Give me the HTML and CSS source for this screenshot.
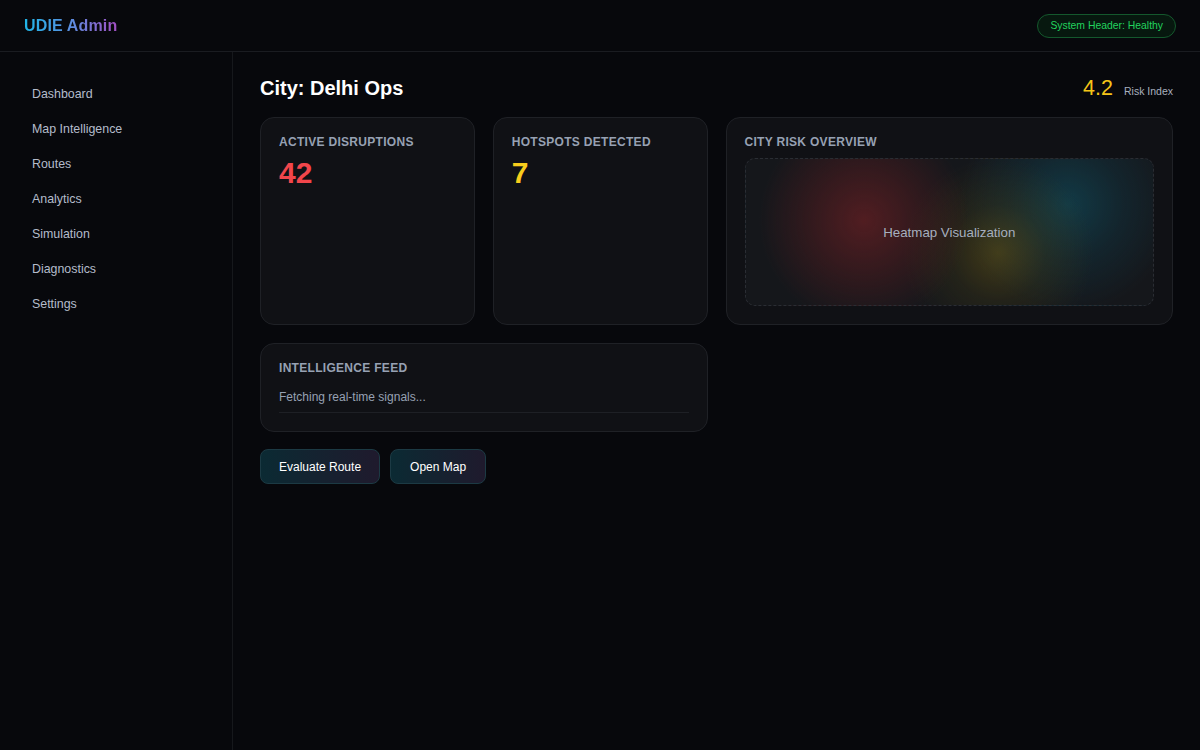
FILE: index.html
```html
<!DOCTYPE html>
<html lang="en">
<head>
  <meta charset="UTF-8" />
  <meta name="viewport" content="width=device-width, initial-scale=1" />
  <title>UDIE Admin</title>
  <link rel="stylesheet" href="styles.css">
</head>
<body>
  <header class="topbar">
    <div class="brand">UDIE Admin</div>
    <div class="status-pill">System Header: Healthy</div>
  </header>

  <div class="layout">
    <nav class="sidebar" aria-label="Main navigation">
      <a href="#">Dashboard</a>
      <a href="#">Map Intelligence</a>
      <a href="#">Routes</a>
      <a href="#">Analytics</a>
      <a href="#">Simulation</a>
      <a href="#">Diagnostics</a>
      <a href="#">Settings</a>
    </nav>

    <main class="content">
      <div class="page-head">
        <h1>City: Delhi Ops</h1>
        <div class="risk">
          <span class="risk-value">4.2</span>
          <span class="risk-label">Risk Index</span>
        </div>
      </div>

      <section class="grid">
        <div class="card">
          <div class="card-label">Active Disruptions</div>
          <div class="metric metric-red">42</div>
        </div>
        <div class="card">
          <div class="card-label">Hotspots Detected</div>
          <div class="metric metric-yellow">7</div>
        </div>
        <div class="card span-2">
          <div class="card-label">City Risk Overview</div>
          <div class="heatmap">Heatmap Visualization</div>
        </div>
        <div class="card span-2">
          <div class="card-label">Intelligence Feed</div>
          <div class="feed-item">Fetching real-time signals...</div>
        </div>
      </section>

      <div class="actions">
        <button type="button" class="btn">Evaluate Route</button>
        <button type="button" class="btn btn-map">Open Map</button>
      </div>
    </main>
  </div>
</body>
</html>
```

FILE: styles.css
```css
/* Reset and base */
* {
  box-sizing: border-box;
  margin: 0;
  padding: 0;
}
body {
  background: #07080c;
  color: #e5e7eb;
  font-family: "Liberation Sans", Arial, Helvetica, sans-serif;
  height: 100vh;
  display: flex;
  flex-direction: column;
  overflow: hidden;
}

/* Top bar */
.topbar {
  height: 52px;
  flex-shrink: 0;
  display: flex;
  align-items: center;
  justify-content: space-between;
  padding: 0 24px;
  border-bottom: 1px solid #1a1c21;
}
.brand {
  font-size: 16px;
  font-weight: 700;
  letter-spacing: 0.15px;
  background: linear-gradient(90deg, #1fb6e8 0%, #5b8ee0 50%, #a24fc4 100%);
  -webkit-background-clip: text;
  background-clip: text;
  color: transparent;
}
.status-pill {
  height: 24px;
  display: flex;
  align-items: center;
  padding: 0 12px;
  font-size: 10.4px;
  color: #22d35e;
  background: #07180f;
  border: 1px solid #14582d;
  border-radius: 12px;
}

/* Layout */
.layout {
  flex: 1;
  display: flex;
  min-height: 0;
}
.sidebar {
  width: 233px;
  flex-shrink: 0;
  border-right: 1px solid #16181c;
  padding: 25px 0 0 32px;
  display: flex;
  flex-direction: column;
}
.sidebar a {
  display: block;
  padding: 10px 0;
  line-height: 15px;
  font-size: 12.4px;
  color: #b4bccb;
  text-decoration: none;
}

.content {
  flex: 1;
  padding: 24px 27px;
}

/* Page heading */
.page-head {
  display: flex;
  align-items: center;
  justify-content: space-between;
  height: 24px;
  margin-bottom: 17px;
}
h1 {
  font-size: 20px;
  font-weight: 700;
  color: #ffffff;
}
.risk {
  display: flex;
  align-items: baseline;
  gap: 11px;
}
.risk-value {
  font-size: 21.5px;
  color: #f5c518;
}
.risk-label {
  font-size: 10.5px;
  color: #a7b0bf;
}

/* Cards */
.grid {
  display: grid;
  grid-template-columns: repeat(4, 1fr);
  gap: 18px 18px;
}
.card {
  background: #101115;
  border: 1px solid #1f2126;
  border-radius: 14px;
  padding: 18px;
}
.span-2 {
  grid-column: span 2;
}
.card-label {
  font-size: 12px;
  line-height: 12px;
  font-weight: 700;
  letter-spacing: 0.3px;
  text-transform: uppercase;
  color: #97a1b3;
}
.metric {
  margin-top: 10px;
  font-size: 30px;
  line-height: 30px;
  font-weight: 700;
}
.metric-red {
  color: #f2464b;
}
.metric-yellow {
  color: #f8cd1c;
}

/* Heatmap placeholder */
.heatmap {
  margin-top: 10px;
  height: 148px;
  border: 1px dashed #2a2d33;
  border-radius: 10px;
  display: flex;
  align-items: center;
  justify-content: center;
  font-size: 13.3px;
  color: #a6afbf;
  background:
    radial-gradient(circle at 29% 42%, rgba(130, 34, 38, 0.55) 0, rgba(110, 30, 34, 0.32) 55px, transparent 105px),
    radial-gradient(circle at 62% 64%, rgba(110, 92, 20, 0.5) 0, rgba(80, 72, 20, 0.24) 48px, transparent 95px),
    radial-gradient(circle at 79% 31%, rgba(14, 92, 112, 0.5) 0, rgba(14, 76, 96, 0.26) 55px, transparent 108px),
    #15171b;
}

/* Feed */
.feed-item {
  margin-top: 15px;
  font-size: 12px;
  line-height: 16px;
  color: #97a1b3;
  padding-bottom: 7px;
  border-bottom: 1px solid #1e2025;
}

/* Buttons */
.actions {
  display: flex;
  gap: 10px;
  margin-top: 17px;
}
.btn {
  height: 35px;
  padding: 0 18px;
  font-family: inherit;
  font-size: 12px;
  color: #ffffff;
  background: linear-gradient(90deg, #0b2a33 0%, #1f1a2d 100%);
  border: 1px solid #1c3a44;
  border-radius: 8px;
  cursor: pointer;
}
.btn-map {
  padding: 0 19px;
}
```
